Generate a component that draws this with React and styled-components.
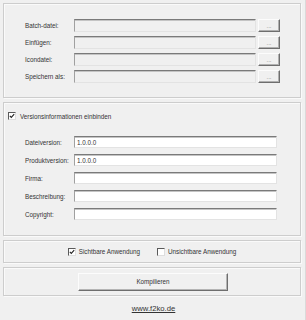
import styled, { createGlobalStyle } from "styled-components";

const Global = createGlobalStyle`
  html, body {
    margin: 0;
    padding: 0;
    background: #f0f0f0;
  }
  body {
    font-family: "Liberation Sans", Arial, sans-serif;
    font-size: 6.3px;
    color: #333333;
  }
`;

const Page = styled.div`
  width: 306px;
  height: 320px;
  box-sizing: border-box;
  padding: 3px 4px 0 3px;
  display: flex;
  flex-direction: column;
  gap: 4px;
  border-right: 1px solid #dadada;
`;

const Panel = styled.div`
  box-sizing: border-box;
  height: ${({ h }) => h}px;
  border: 1px solid #cdcdcd;
  box-shadow: inset 1px 1px 0 #fafafa, 1px 1px 0 #fafafa;
  display: flex;
  flex-direction: column;
`;

const FileRows = styled.div`
  display: flex;
  flex-direction: column;
  gap: 4px;
  padding: 15px 0 0 21px;
`;

const InfoRows = styled.div`
  display: flex;
  flex-direction: column;
  gap: 6px;
  padding: 0 0 0 21px;
`;

const Row = styled.div`
  display: flex;
  align-items: center;
  height: ${({ h }) => h}px;
`;

const Label = styled.span`
  width: 49px;
  white-space: nowrap;
`;

const Field = styled.div`
  box-sizing: border-box;
  width: ${({ w }) => w}px;
  height: 100%;
  background: ${({ readOnly }) => (readOnly ? "#f0f0f0" : "#ffffff")};
  border-style: solid;
  border-width: 1px;
  border-color: #7a7a7a #e3e3e3 #e3e3e3 #a0a0a0;
  box-shadow: inset 0 1px 0 #c4c4c4;
  display: flex;
  align-items: center;
  padding-left: 2px;
`;

const DotsButton = styled.div`
  box-sizing: border-box;
  width: 22px;
  height: 100%;
  margin-left: 2px;
  background: #f0f0f0;
  border-style: solid;
  border-width: 1px;
  border-color: #fcfcfc #6e6e6e #6e6e6e #fcfcfc;
  box-shadow: inset -1px -1px 0 #b0b0b0;
  display: flex;
  align-items: center;
  justify-content: center;
  font-size: 6px;
  line-height: 6px;
  padding-top: 1px;
  color: #777777;
`;

const CheckRow = styled.label`
  display: flex;
  align-items: center;
  gap: ${({ gap }) => gap}px;
  white-space: nowrap;
`;

const IncludeRow = styled(CheckRow)`
  padding: 9px 0 0 4px;
  margin-bottom: 16px;
  height: 8px;
`;

const Box = styled.span`
  box-sizing: border-box;
  width: 8px;
  height: 8px;
  background: #ffffff;
  border-style: solid;
  border-width: 1px;
  border-color: #5a5a5a #dedede #dedede #5a5a5a;
  display: flex;
  align-items: center;
  justify-content: center;
`;

const ModeBar = styled.div`
  flex: 1;
  display: flex;
  align-items: center;
  justify-content: center;
  gap: 17px;
`;

const BuildBar = styled.div`
  flex: 1;
  display: flex;
  align-items: center;
  justify-content: center;
  padding-left: 2px;
`;

const BuildButton = styled.button`
  box-sizing: border-box;
  width: 150px;
  height: 18px;
  padding: 0;
  background: #f0f0f0;
  border-style: solid;
  border-width: 1px;
  border-color: #fcfcfc #6e6e6e #6e6e6e #fcfcfc;
  box-shadow: inset -1px -1px 0 #b4b4b4;
  font-family: inherit;
  font-size: 6.3px;
  color: #333333;
`;

const Footer = styled.div`
  flex: 1;
  display: flex;
  justify-content: center;
  padding: 4px 0 0 3px;
`;

const Link = styled.a`
  color: #333333;
  font-size: 7.7px;
  text-decoration: underline;
  height: 10px;
`;

function Check({ checked }) {
  return (
    <Box>
      {checked && (
        <svg width="6" height="6" viewBox="0 0 6 6">
          <path d="M0.8 2.8 L2.3 4.4 L5.2 1.2" fill="none" stroke="#222" strokeWidth="1.1" />
        </svg>
      )}
    </Box>
  );
}

const files = ["Batch-datei:", "Einfügen:", "Icondatei:", "Speichern als:"];
const infos = [
  ["Dateiversion:", "1.0.0.0"],
  ["Produktversion:", "1.0.0.0"],
  ["Firma:", ""],
  ["Beschreibung:", ""],
  ["Copyright:", ""],
];

export default function App() {
  return (
    <>
      <Global />
      <Page>
        <Panel h={95}>
          <FileRows>
            {files.map((f) => (
              <Row key={f} h={13}>
                <Label>{f}</Label>
                <Field w={182} readOnly />
                <DotsButton>...</DotsButton>
              </Row>
            ))}
          </FileRows>
        </Panel>

        <Panel h={134}>
          <IncludeRow gap={4}>
            <Check checked />
            Versionsinformationen einbinden
          </IncludeRow>
          <InfoRows>
            {infos.map(([label, value]) => (
              <Row key={label} h={12}>
                <Label>{label}</Label>
                <Field w={203}>{value}</Field>
              </Row>
            ))}
          </InfoRows>
        </Panel>

        <Panel h={23}>
          <ModeBar>
            <CheckRow gap={3}>
              <Check checked />
              Sichtbare Anwendung
            </CheckRow>
            <CheckRow gap={3}>
              <Check />
              Unsichtbare Anwendung
            </CheckRow>
          </ModeBar>
        </Panel>

        <Panel h={29}>
          <BuildBar>
            <BuildButton>Kompilieren</BuildButton>
          </BuildBar>
        </Panel>

        <Footer>
          <Link>www.f2ko.de</Link>
        </Footer>
      </Page>
    </>
  );
}
